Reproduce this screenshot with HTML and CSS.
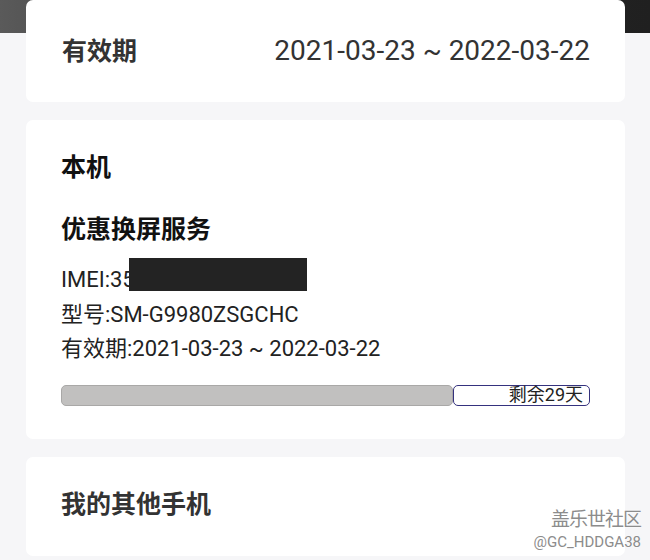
FILE: index.html
```html
<!DOCTYPE html>
<html lang="zh-CN">
<head>
<meta charset="utf-8">
<title>优惠换屏服务</title>
<link rel="stylesheet" href="styles.css">
</head>
<body>
<main class="page">
  <section class="card card-period">
    <div class="period-label">有效期</div>
    <div class="period-value">2021-03-23 ~ 2022-03-22</div>
  </section>

  <section class="card card-device">
    <h2 class="device-title">本机</h2>
    <h3 class="service-title">优惠换屏服务</h3>
    <div class="info">
      <div class="info-line imei">IMEI:35<span class="redact"></span></div>
      <div class="info-line">型号:SM-G9980ZSGCHC</div>
      <div class="info-line">有效期:2021-03-23 ~ 2022-03-22</div>
    </div>
    <div class="progress">
      <div class="progress-used"></div>
      <div class="progress-left">剩余29天</div>
    </div>
  </section>

  <section class="card card-other">
    <h2 class="other-title">我的其他手机</h2>
  </section>
</main>
<div class="watermark">
  <div class="wm-name">盖乐世社区</div>
  <div class="wm-user">@GC_HDDGA38</div>
</div>
</body>
</html>
```

FILE: styles.css
```css
html, body {
  margin: 0;
  padding: 0;
}
body {
  width: 650px;
  height: 560px;
  overflow: hidden;
  position: relative;
  font-family: Roboto, "Noto Sans CJK SC", sans-serif;
  background: linear-gradient(90deg, #5a5a5a 0%, #3a3a3a 30%, #252525 70%, #202020 100%) top left / 100% 33px no-repeat, #f6f6f8;
  color: #222;
}
.page {
  display: flex;
  flex-direction: column;
  gap: 18px;
  padding: 0 25px 0 26px;
}
.card {
  background: #fff;
  border-radius: 7px;
}
.card-period {
  height: 102px;
  display: flex;
  align-items: center;
  justify-content: space-between;
  padding: 0 35px 0 36px;
  box-sizing: border-box;
}
.period-label {
  font-size: 25px;
  font-weight: 700;
  color: #333;
  margin-top: -5px;
}
.period-value {
  font-size: 28px;
  color: #333;
  margin-top: -2px;
}
.card-device {
  height: 319px;
  box-sizing: border-box;
  padding: 32px 35px 0 35px;
}
.device-title, .service-title, .other-title {
  margin: 0;
  font-size: 25px;
  font-weight: 700;
  line-height: 32px;
  color: #111;
}
.service-title {
  margin-top: 30px;
}
.info {
  margin-top: 17px;
  font-size: 22px;
  color: #222;
}
.info-line {
  line-height: 34.5px;
  height: 34.5px;
}
.imei {
  position: relative;
}
.redact {
  position: absolute;
  left: 68px;
  top: -5px;
  width: 178px;
  height: 33px;
  background: #232323;
}
.progress {
  margin-top: 18px;
  display: flex;
  height: 21px;
  width: 529px;
}
.progress-used {
  width: 392px;
  background: #c1c0bf;
  border: 1px solid #a9a8a7;
  border-radius: 5px;
  box-sizing: border-box;
}
.progress-left {
  flex: 1;
  border: 1.5px solid #35327e;
  border-radius: 5px;
  box-sizing: border-box;
  background: #fff;
  text-align: right;
  font-size: 18px;
  line-height: 18px;
  padding-right: 6px;
  color: #222;
}
.card-other {
  height: 99px;
  box-sizing: border-box;
  padding: 32px 35px 0 35px;
}
.other-title {
  color: #333;
}
.watermark {
  position: absolute;
  right: 9px;
  top: 508px;
  text-align: right;
  color: #8c8c8c;
  text-shadow: 0 0 2px #fff;
}
.wm-name {
  font-size: 19px;
  line-height: 24px;
  letter-spacing: -1px;
}
.wm-user {
  font-size: 15px;
  line-height: 21px;
}
```
